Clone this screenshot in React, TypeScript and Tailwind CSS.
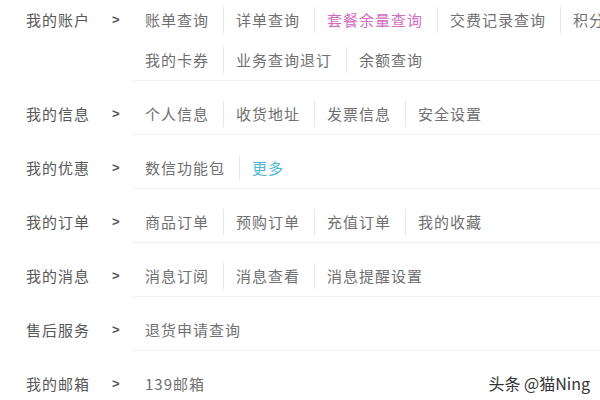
const rows: { label: string; lines: { text: string; tone?: 'pink' | 'cyan' }[][] }[] = [
  {
    label: '我的账户',
    lines: [
      [
        { text: '账单查询' },
        { text: '详单查询' },
        { text: '套餐余量查询', tone: 'pink' },
        { text: '交费记录查询' },
        { text: '积分查询' },
      ],
      [{ text: '我的卡券' }, { text: '业务查询退订' }, { text: '余额查询' }],
    ],
  },
  {
    label: '我的信息',
    lines: [[{ text: '个人信息' }, { text: '收货地址' }, { text: '发票信息' }, { text: '安全设置' }]],
  },
  {
    label: '我的优惠',
    lines: [[{ text: '数信功能包' }, { text: '更多', tone: 'cyan' }]],
  },
  {
    label: '我的订单',
    lines: [[{ text: '商品订单' }, { text: '预购订单' }, { text: '充值订单' }, { text: '我的收藏' }]],
  },
  {
    label: '我的消息',
    lines: [[{ text: '消息订阅' }, { text: '消息查看' }, { text: '消息提醒设置' }]],
  },
  {
    label: '售后服务',
    lines: [[{ text: '退货申请查询' }]],
  },
  {
    label: '我的邮箱',
    lines: [[{ text: '139邮箱' }]],
  },
];

export default function App() {
  return (
    <div
      className="relative w-[600px] h-[400px] overflow-hidden bg-white text-[15px] tracking-[1px] text-[#707070]"
      style={{ fontFamily: '"Noto Sans CJK SC", "Noto Sans", sans-serif' }}
    >
      {rows.map((row, i) => (
        <div key={row.label} className={`flex ${i === 0 ? 'pt-0' : 'pt-[13px]'}`}>
          {/* label column */}
          <div className="flex h-10 w-[133px] shrink-0 items-center pl-[26px]">
            <span className="w-[86px] text-[#585858]">{row.label}</span>
            <span
              className="w-[21px] text-[13px] font-bold text-[#555]"
              style={{ fontFamily: '"Liberation Sans", sans-serif' }}
            >
              &gt;
            </span>
          </div>

          {/* links */}
          <div className="flex-1 min-w-0 border-b border-[#f0f0f0]">
            {row.lines.map((line, j) => (
              <div key={j} className="flex h-10 items-center whitespace-nowrap">
                {line.map((item, k) => (
                  <span
                    key={item.text}
                    className={`flex h-[26px] shrink-0 items-center pl-[12px] pr-[14px] ${
                      k > 0 ? 'border-l border-[#e6e6e6]' : ''
                    } ${
                      item.tone === 'pink'
                        ? 'text-[#d36cc3]'
                        : item.tone === 'cyan'
                          ? 'text-[#4cb8d2]'
                          : ''
                    }`}
                  >
                    {item.text}
                  </span>
                ))}
              </div>
            ))}
          </div>
        </div>
      ))}

      {/* watermark */}
      <div className="absolute right-[10px] bottom-[5px] text-[16px] tracking-normal text-[#333]">
        头条 @猫Ning
      </div>
    </div>
  );
}
